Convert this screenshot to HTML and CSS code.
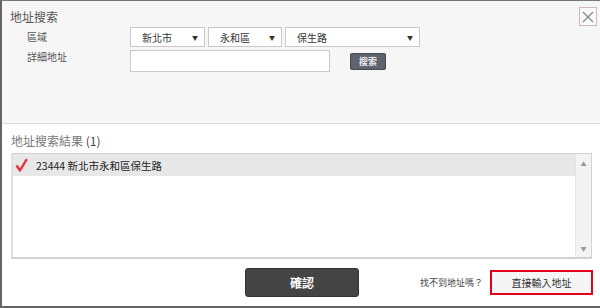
FILE: index.html
```html
<!DOCTYPE html>
<html lang="zh-Hant">
<head>
    <meta charset="UTF-8">
    <title>地址搜索</title>
    <link rel="stylesheet" href="styles.css">
</head>
<body>
    <div class="dialog">
        <div class="search-panel">
            <div class="panel-head">
                <div class="panel-title">地址搜索</div>
                <div class="close-btn">
                    <svg width="12" height="12" viewBox="0 0 12 12"><path d="M1 1L11 11M11 1L1 11" stroke="#8a8a8a" stroke-width="1.4" fill="none"/></svg>
                </div>
            </div>
            <div class="search-form">
                <div class="field-label">區域</div>
                <div class="field-row">
                    <div class="fake-select w-city"><span>新北市</span><i class="caret">▼</i></div>
                    <div class="fake-select w-dist"><span>永和區</span><i class="caret">▼</i></div>
                    <div class="fake-select w-road"><span>保生路</span><i class="caret">▼</i></div>
                </div>
                <div class="field-label label-top">詳細地址</div>
                <div class="field-row gap-wide">
                    <div class="text-input"></div>
                    <button class="search-btn">搜索</button>
                </div>
            </div>
        </div>
        <div class="result-panel">
            <div class="result-title">地址搜索結果 <b>(1)</b></div>
            <div class="result-list">
                <div class="result-items">
                    <div class="result-row">
                        <svg class="check" width="13" height="14" viewBox="0 0 13 14"><path d="M1.5 7.5L5 12.5L11.8 1.2" stroke="#e8333b" stroke-width="2.4" fill="none" stroke-linejoin="round"/></svg>
                        <span>23444 新北市永和區保生路</span>
                    </div>
                </div>
                <div class="scrollbar">
                    <i>▲</i>
                    <i>▼</i>
                </div>
            </div>
            <div class="footer">
                <div></div>
                <button class="confirm-btn">確認</button>
                <div class="footer-right">
                    <span class="hint">找不到地址嗎？</span>
                    <button class="manual-btn">直接輸入地址</button>
                </div>
            </div>
        </div>
    </div>
</body>
</html>
```

FILE: styles.css
```css
body {
    margin: 0;
    font-family: "Noto Sans CJK TC", "Liberation Sans", sans-serif;
    background: #fff;
}
.dialog {
    box-sizing: border-box;
    width: 600px;
    height: 308px;
    border-left: 2px solid #666;
    border-top: 1px solid #777;
    border-bottom: 2px solid #666;
    display: flex;
    flex-direction: column;
}
.search-panel {
    box-sizing: border-box;
    flex: none;
    height: 123px;
    background: #f6f6f6;
    border-bottom: 1px solid #dcdcdc;
    padding: 6px 3px 0 8px;
}
.panel-head {
    display: flex;
    justify-content: space-between;
    align-items: center;
    height: 19px;
}
.panel-title {
    font-size: 12px;
    color: #555;
    line-height: 16px;
}
.close-btn {
    box-sizing: border-box;
    width: 18px;
    height: 19px;
    border: 1px solid #cdb9bd;
    background: #fafafa;
    display: flex;
    align-items: center;
    justify-content: center;
}
.search-form {
    display: grid;
    grid-template-columns: 103px auto;
    row-gap: 3px;
    padding-left: 17px;
    margin-top: 1px;
}
.field-label {
    font-size: 10px;
    color: #555;
    line-height: 20px;
}
.label-top {
    line-height: 12px;
    padding-top: 1px;
}
.field-row {
    display: flex;
    gap: 3px;
    align-items: flex-start;
}
.gap-wide {
    gap: 20px;
}
.fake-select {
    box-sizing: border-box;
    height: 20px;
    background: #fff;
    border: 1px solid #c9c9c9;
    display: flex;
    align-items: center;
    justify-content: space-between;
    padding: 0 6px 0 11px;
    font-size: 10px;
    color: #333;
}
.w-city { width: 75px; }
.w-dist { width: 74px; }
.w-road { width: 135px; }
.caret {
    font-style: normal;
    font-size: 6px;
    color: #333;
}
.text-input {
    box-sizing: border-box;
    width: 200px;
    height: 22px;
    background: #fff;
    border: 1px solid #c9c9c9;
}
.search-btn {
    box-sizing: border-box;
    margin-top: 3px;
    width: 36px;
    height: 17px;
    padding: 0;
    background: #5e636d;
    border: 1px solid #454951;
    border-radius: 2px;
    color: #e8e8f0;
    font-family: inherit;
    font-size: 9px;
    font-weight: bold;
}
.result-panel {
    flex: 1;
    background: #fff;
    padding: 9px 7px 0 9px;
}
.result-title {
    font-size: 12px;
    line-height: 16px;
    color: #777;
}
.result-title b {
    font-weight: normal;
    color: #444;
}
.result-list {
    box-sizing: border-box;
    margin: 4px 0 0 0;
    width: 581px;
    height: 106px;
    border: 1px solid #d2d2d2;
    border-left-width: 2px;
    border-bottom-width: 2px;
    border-left-color: #e2e2e2;
    display: flex;
}
.result-items {
    flex: 1;
}
.result-row {
    height: 22px;
    background: #e8e8e8;
    display: flex;
    align-items: center;
    gap: 8px;
    padding-left: 2px;
    font-size: 10.5px;
    color: #222;
}
.scrollbar {
    width: 15px;
    background: #f3f3f3;
    border-left: 1px solid #e4e4e4;
    display: flex;
    flex-direction: column;
    justify-content: space-between;
    align-items: center;
    padding: 5px 0 4px;
}
.scrollbar i {
    font-style: normal;
    font-size: 6px;
    color: #999;
}
.footer {
    display: grid;
    grid-template-columns: 1fr auto 1fr;
    align-items: center;
    margin-top: 9px;
}
.confirm-btn {
    width: 114px;
    height: 29px;
    background: #444;
    border: 1px solid #333;
    border-radius: 3px;
    color: #fff;
    font-family: inherit;
    font-size: 12px;
    font-weight: bold;
}
.footer-right {
    justify-self: end;
    display: flex;
    align-items: center;
    gap: 7px;
}
.hint {
    font-size: 9px;
    color: #444;
}
.manual-btn {
    box-sizing: border-box;
    width: 103px;
    height: 25px;
    background: #f5f5f5;
    border: 2px solid #e3001b;
    color: #333;
    font-family: inherit;
    font-size: 10px;
    padding: 0;
}
```
